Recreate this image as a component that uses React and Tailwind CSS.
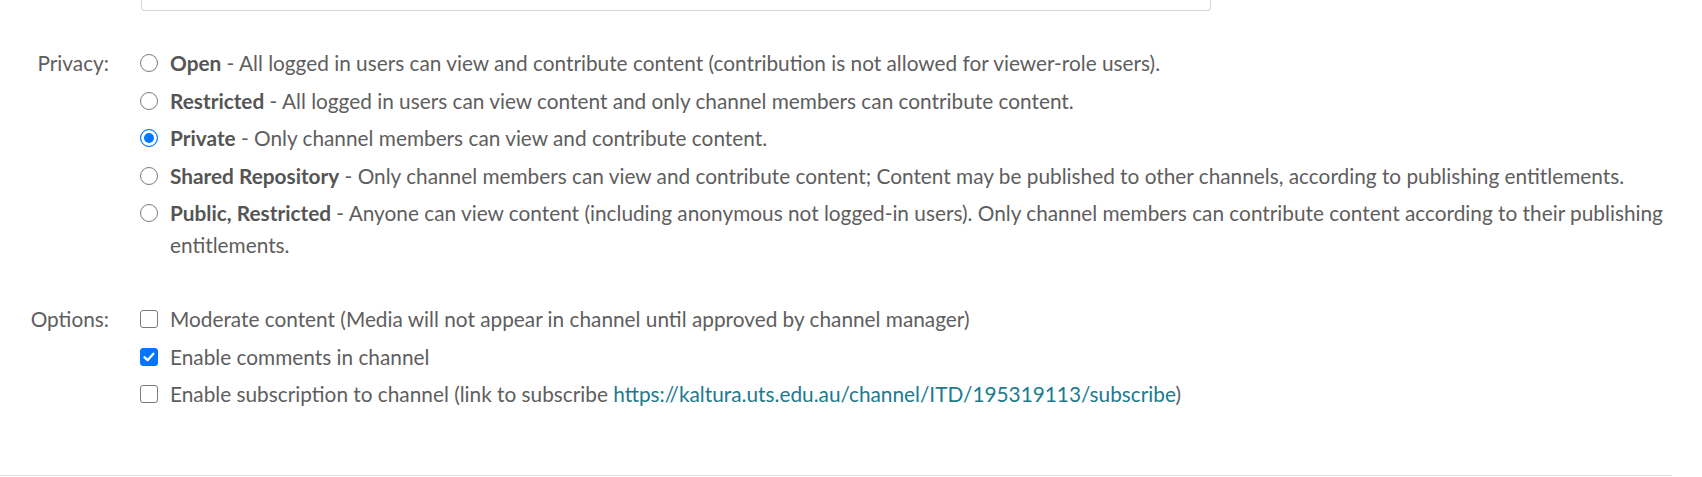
import React, { useState } from "react";

const privacyOptions = [
  { id: "open", title: "Open", desc: "All logged in users can view and contribute content (contribution is not allowed for viewer-role users)." },
  { id: "restricted", title: "Restricted", desc: "All logged in users can view content and only channel members can contribute content." },
  { id: "private", title: "Private", desc: "Only channel members can view and contribute content." },
  { id: "shared", title: "Shared Repository", desc: "Only channel members can view and contribute content; Content may be published to other channels, according to publishing entitlements." },
  { id: "public", title: "Public, Restricted", desc: "Anyone can view content (including anonymous not logged-in users). Only channel members can contribute content according to their publishing entitlements." },
];

const Radio = ({ checked, onChange }) => (
  <input
    type="radio"
    name="privacy"
    checked={checked}
    onChange={onChange}
    className="appearance-none w-[18px] h-[18px] m-0 mt-[7px] shrink-0 rounded-full border border-[#7a7a7a] bg-white checked:border-[#0075ff] checked:bg-[#0075ff] checked:shadow-[inset_0_0_0_3px_white]"
  />
);

const Checkbox = ({ checked, onChange }) => (
  <span className="relative w-[18px] h-[18px] mt-[7px] shrink-0">
    <input
      type="checkbox"
      checked={checked}
      onChange={onChange}
      className="appearance-none block w-[18px] h-[18px] m-0 rounded-[3px] border border-[#7a7a7a] bg-white checked:border-[#0075ff] checked:bg-[#0075ff]"
    />
    {checked && (
      <svg viewBox="0 0 18 18" className="absolute inset-0 w-[18px] h-[18px] pointer-events-none">
        <path d="M4.5 9.3 L7.6 12.2 L13.4 5.8" fill="none" stroke="white" strokeWidth="2.3" strokeLinecap="round" strokeLinejoin="round" />
      </svg>
    )}
  </span>
);

const App = () => {
  const [privacy, setPrivacy] = useState("private");
  const [options, setOptions] = useState({ moderate: false, comments: true, subscription: false });

  const toggle = (key) => setOptions({ ...options, [key]: !options[key] });

  return (
    <div className="bg-white min-h-screen font-['Lato','Open_Sans',sans-serif] text-[20.8px] leading-[32px] text-[#5e5e5e]">
      <div className="w-[1672px] border-b border-[#dedede] pb-[65px]">
        {/* bottom of the description textarea above */}
        <div className="ml-[141px] w-[1070px] h-[11px] border-x border-b border-[#d6d6d6] rounded-b-[4px]" />

        {/* Privacy */}
        <div className="flex mt-[36px]">
          <div className="w-[109px] text-right shrink-0">Privacy:</div>
          <div className="ml-[31px] flex flex-col gap-[5.5px]">
            {privacyOptions.map((opt) => (
              <label key={opt.id} className="flex items-start gap-[12px] cursor-pointer">
                <Radio checked={privacy === opt.id} onChange={() => setPrivacy(opt.id)} />
                <span>
                  <b className="font-bold text-[#555]">{opt.title}</b> - {opt.desc}
                </span>
              </label>
            ))}
          </div>
        </div>

        {/* Options */}
        <div className="flex mt-[42px]">
          <div className="w-[109px] text-right shrink-0">Options:</div>
          <div className="ml-[31px] flex flex-col gap-[5.5px]">
            <label className="flex items-start gap-[12px] cursor-pointer">
              <Checkbox checked={options.moderate} onChange={() => toggle("moderate")} />
              <span>Moderate content (Media will not appear in channel until approved by channel manager)</span>
            </label>
            <label className="flex items-start gap-[12px] cursor-pointer">
              <Checkbox checked={options.comments} onChange={() => toggle("comments")} />
              <span>Enable comments in channel</span>
            </label>
            <label className="flex items-start gap-[12px] cursor-pointer">
              <Checkbox checked={options.subscription} onChange={() => toggle("subscription")} />
              <span>
                Enable subscription to channel (link to subscribe{" "}
                <a href="#" className="text-[#1c7a8e]">https://kaltura.uts.edu.au/channel/ITD/195319113/subscribe</a>)
              </span>
            </label>
          </div>
        </div>
      </div>
    </div>
  );
};

export default App;
